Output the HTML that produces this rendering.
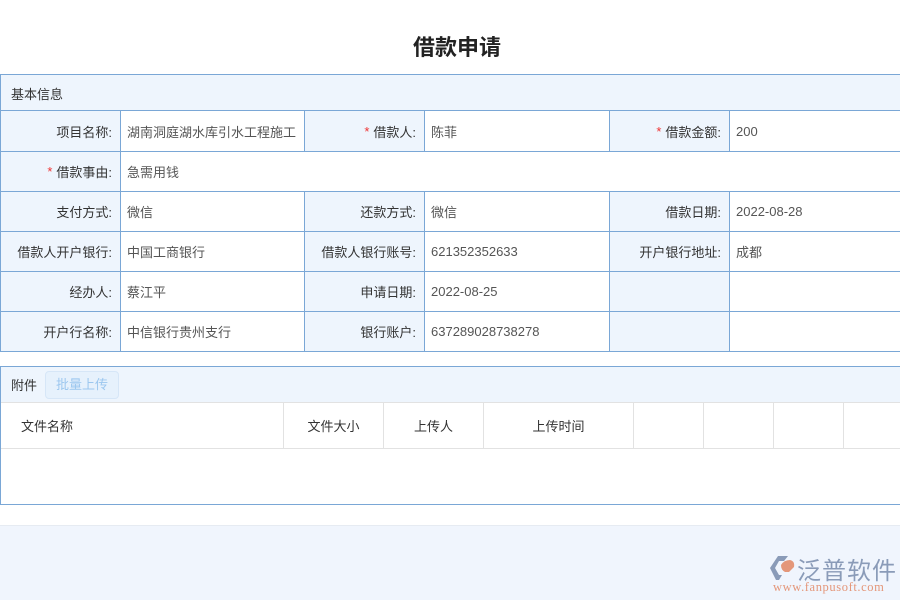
<!DOCTYPE html>
<html><head><meta charset="utf-8"><style>
*{margin:0;padding:0;box-sizing:border-box}
body{width:900px;height:600px;overflow:hidden;background:#fff;font-family:"Liberation Sans","Noto Sans CJK SC",sans-serif;font-size:13px;color:#333;position:relative}
.a{position:absolute}
.t{left:0;top:30px;width:900px;text-align:center;font-size:22px;font-weight:bold;color:#222;padding-left:14px}
.c{position:absolute;border-right:1px solid #7aa7d6;border-bottom:1px solid #7aa7d6;display:flex;align-items:center;padding:0 8px;color:#555}
.l{background:#eef5fd;justify-content:flex-end;color:#333}
.r{color:#e33;margin-right:4px}
.h{position:absolute;border-right:1px solid #e2e2e2;display:flex;align-items:center;color:#333;height:45px;top:403px}
</style></head><body>
<div class="a t">借款申请</div>
<div class="a" style="left:0;top:74px;width:900px;height:278px;border:1px solid #7aa7d6;border-right:none"></div>
<div class="a" style="left:1px;top:75px;width:899px;height:36px;background:#eef5fd;border-bottom:1px solid #7aa7d6;padding:9px 10px;color:#333">基本信息</div>

<div class="c l" style="left:1px;top:111px;width:120px;height:41px">项目名称:</div>
<div class="c" style="left:121px;top:111px;width:184px;height:41px;padding:0 6px">湖南洞庭湖水库引水工程施工</div>
<div class="c l" style="left:305px;top:111px;width:120px;height:41px"><span class="r">*</span>借款人:</div>
<div class="c" style="left:425px;top:111px;width:185px;height:41px;padding-left:6px">陈菲</div>
<div class="c l" style="left:610px;top:111px;width:120px;height:41px"><span class="r">*</span>借款金额:</div>
<div class="c" style="left:730px;top:111px;width:171px;height:41px;padding-left:6px">200</div>

<div class="c l" style="left:1px;top:152px;width:120px;height:40px"><span class="r">*</span>借款事由:</div>
<div class="c" style="left:121px;top:152px;width:780px;height:40px;padding-left:6px">急需用钱</div>

<div class="c l" style="left:1px;top:192px;width:120px;height:40px">支付方式:</div>
<div class="c" style="left:121px;top:192px;width:184px;height:40px;padding-left:6px">微信</div>
<div class="c l" style="left:305px;top:192px;width:120px;height:40px">还款方式:</div>
<div class="c" style="left:425px;top:192px;width:185px;height:40px;padding-left:6px">微信</div>
<div class="c l" style="left:610px;top:192px;width:120px;height:40px">借款日期:</div>
<div class="c" style="left:730px;top:192px;width:171px;height:40px;padding-left:6px">2022-08-28</div>

<div class="c l" style="left:1px;top:232px;width:120px;height:40px">借款人开户银行:</div>
<div class="c" style="left:121px;top:232px;width:184px;height:40px;padding-left:6px">中国工商银行</div>
<div class="c l" style="left:305px;top:232px;width:120px;height:40px">借款人银行账号:</div>
<div class="c" style="left:425px;top:232px;width:185px;height:40px;padding-left:6px">621352352633</div>
<div class="c l" style="left:610px;top:232px;width:120px;height:40px">开户银行地址:</div>
<div class="c" style="left:730px;top:232px;width:171px;height:40px;padding-left:6px">成都</div>

<div class="c l" style="left:1px;top:272px;width:120px;height:40px">经办人:</div>
<div class="c" style="left:121px;top:272px;width:184px;height:40px;padding-left:6px">蔡江平</div>
<div class="c l" style="left:305px;top:272px;width:120px;height:40px">申请日期:</div>
<div class="c" style="left:425px;top:272px;width:185px;height:40px;padding-left:6px">2022-08-25</div>
<div class="c l" style="left:610px;top:272px;width:120px;height:40px"></div>
<div class="c" style="left:730px;top:272px;width:171px;height:40px"></div>

<div class="c l" style="left:1px;top:312px;width:120px;height:39px;border-bottom:none">开户行名称:</div>
<div class="c" style="left:121px;top:312px;width:184px;height:39px;border-bottom:none;padding-left:6px">中信银行贵州支行</div>
<div class="c l" style="left:305px;top:312px;width:120px;height:39px;border-bottom:none">银行账户:</div>
<div class="c" style="left:425px;top:312px;width:185px;height:39px;border-bottom:none;padding-left:6px">637289028738278</div>
<div class="c l" style="left:610px;top:312px;width:120px;height:39px;border-bottom:none"></div>
<div class="c" style="left:730px;top:312px;width:171px;height:39px;border-bottom:none"></div>

<div class="a" style="left:0;top:366px;width:900px;height:139px;border:1px solid #7aa7d6;border-right:none"></div>
<div class="a" style="left:1px;top:367px;width:899px;height:36px;background:#eef5fd;border-bottom:1px solid #e2e2e2"></div>
<div class="a" style="left:11px;top:375px;color:#333">附件</div>
<div class="a" style="left:45px;top:371px;width:74px;height:28px;border:1px solid #d6e6f7;border-radius:4px;background:#e6f1fc;color:#9cc7ef;text-align:center;line-height:26px">批量上传</div>
<div class="h" style="left:1px;width:283px;padding-left:20px">文件名称</div>
<div class="h" style="left:284px;width:100px;justify-content:center">文件大小</div>
<div class="h" style="left:384px;width:100px;justify-content:center">上传人</div>
<div class="h" style="left:484px;width:150px;justify-content:center">上传时间</div>
<div class="h" style="left:634px;width:70px"></div>
<div class="h" style="left:704px;width:70px"></div>
<div class="h" style="left:774px;width:70px"></div>
<div class="a" style="left:1px;top:448px;width:899px;border-top:1px solid #e2e2e2"></div>

<div class="a" style="left:0;top:525px;width:900px;height:75px;background:#f0f5fd;border-top:1px solid #e6ebf2"></div>
<svg class="a" style="left:770px;top:555px" width="28" height="26" viewBox="0 0 28 26">
<path d="M8 1 L18 1 L14 6 L9 6 L5 13 L9 20 L12 20 L9 25 L6 25 L0 13 Z" fill="#8a9bb8"/>
<path d="M11 10 Q14 5 20 5 Q25 6 24 12 L19 17 L15 17 Q11 15 11 10 Z" fill="#e4977a"/>
</svg>
<div class="a" style="left:797px;top:551px;font-size:24px;color:#8a9bb8;letter-spacing:1px">泛普软件</div>
<div class="a" style="left:773px;top:580px;font-size:12.5px;color:#e4977a;font-family:'Liberation Serif',serif;letter-spacing:0.6px">www.fanpusoft.com</div>
</body></html>
